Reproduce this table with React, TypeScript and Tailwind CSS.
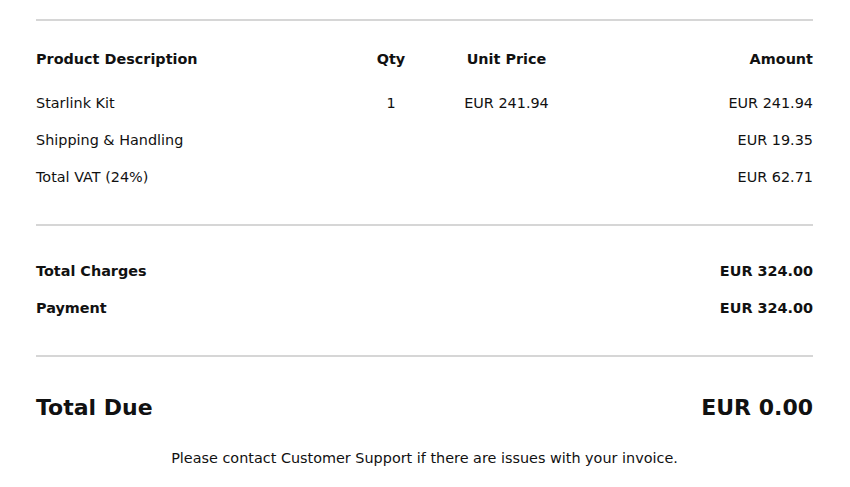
const items = [
  { desc: "Starlink Kit", qty: "1", unit: "EUR 241.94", amount: "EUR 241.94" },
  { desc: "Shipping & Handling", qty: "", unit: "", amount: "EUR 19.35" },
  { desc: "Total VAT (24%)", qty: "", unit: "", amount: "EUR 62.71" },
];

const totals = [
  { label: "Total Charges", value: "EUR 324.00" },
  { label: "Payment", value: "EUR 324.00" },
];

function Divider() {
  return <div className="h-[2px] bg-[#d6d6d6]" />;
}

export default function App() {
  return (
    <div className="min-h-screen bg-white pl-9 pr-[37px] pt-[19px] text-[14.4px] text-[#111] font-['DejaVu_Sans',sans-serif]">
      <Divider />

      {/* line items */}
      <div className="pt-[20px] pb-[28px]">
        <div className="grid h-[37px] grid-cols-[300px_110px_121px_1fr] items-center font-bold">
          <div>Product Description</div>
          <div className="text-center">Qty</div>
          <div className="text-center">Unit Price</div>
          <div className="text-right">Amount</div>
        </div>
        <div className="mt-[7px]">
          {items.map((it) => (
            <div key={it.desc} className="grid h-[37px] grid-cols-[300px_110px_121px_1fr] items-center">
              <div>{it.desc}</div>
              <div className="text-center">{it.qty}</div>
              <div className="text-center">{it.unit}</div>
              <div className="text-right">{it.amount}</div>
            </div>
          ))}
        </div>
      </div>

      <Divider />

      {/* totals */}
      <div className="pt-[27px] pb-[28px]">
        {totals.map((t) => (
          <div key={t.label} className="flex h-[37px] items-center justify-between font-bold">
            <span>{t.label}</span>
            <span>{t.value}</span>
          </div>
        ))}
      </div>

      <Divider />

      <div className="mt-[30px] flex h-[40px] items-center justify-between text-[22px] font-bold">
        <span>Total Due</span>
        <span>EUR 0.00</span>
      </div>

      <p className="mt-[21px] h-[20px] leading-[20px] text-center">
        Please contact Customer Support if there are issues with your invoice.
      </p>
    </div>
  );
}
